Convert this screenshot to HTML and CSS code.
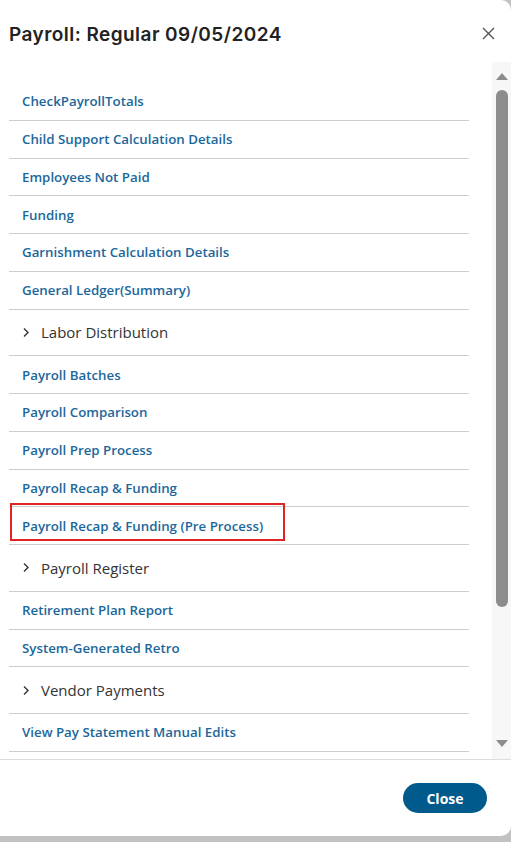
FILE: index.html
```html
<!DOCTYPE html>
<html lang="en">

<head>
    <meta charset="UTF-8">
    <meta name="viewport" content="width=device-width, initial-scale=1.0">
    <title>Payroll Reports</title>
    <link rel="stylesheet" href="styles.css">
</head>

<body>
    <div class="modal">
        <div class="modal-header">
            <h1 class="modal-title">Payroll: Regular 09/05/2024</h1>
            <button class="close-x" aria-label="Close">
                <svg width="13" height="13" viewBox="0 0 13 13">
                    <path d="M1 1 L12 12 M12 1 L1 12" stroke="#555" stroke-width="1.4" fill="none" />
                </svg>
            </button>
        </div>

        <div class="modal-body">
            <div class="report-list">
                <a class="row" href="#">CheckPayrollTotals</a>
                <a class="row" href="#">Child Support Calculation Details</a>
                <a class="row" href="#">Employees Not Paid</a>
                <a class="row" href="#">Funding</a>
                <a class="row" href="#">Garnishment Calculation Details</a>
                <a class="row" href="#">General Ledger(Summary)</a>
                <div class="row group">
                    <svg class="chev" width="8" height="11" viewBox="0 0 8 11">
                        <path d="M2 1.5 L6 5.5 L2 9.5" stroke="#333" stroke-width="1.4" fill="none" />
                    </svg>
                    Labor Distribution
                </div>
                <a class="row" href="#">Payroll Batches</a>
                <a class="row" href="#">Payroll Comparison</a>
                <a class="row" href="#">Payroll Prep Process</a>
                <a class="row" href="#">Payroll Recap &amp; Funding</a>
                <a class="row marked" href="#">Payroll Recap &amp; Funding (Pre Process)<span class="mark"></span></a>
                <div class="row group">
                    <svg class="chev" width="8" height="11" viewBox="0 0 8 11">
                        <path d="M2 1.5 L6 5.5 L2 9.5" stroke="#333" stroke-width="1.4" fill="none" />
                    </svg>
                    Payroll Register
                </div>
                <a class="row" href="#">Retirement Plan Report</a>
                <a class="row" href="#">System-Generated Retro</a>
                <div class="row group">
                    <svg class="chev" width="8" height="11" viewBox="0 0 8 11">
                        <path d="M2 1.5 L6 5.5 L2 9.5" stroke="#333" stroke-width="1.4" fill="none" />
                    </svg>
                    Vendor Payments
                </div>
                <a class="row" href="#">View Pay Statement Manual Edits</a>
            </div>
            <div class="scrollbar">
                <span class="arrow up"></span>
                <span class="thumb"></span>
                <span class="arrow down"></span>
            </div>
        </div>

        <div class="modal-footer">
            <button class="btn-close">Close</button>
        </div>
    </div>
</body>

</html>
```

FILE: styles.css
```css
/* Page */
body {
    margin: 0;
    background-color: #c2c2c2;
    font-family: "Open Sans", "Noto Sans", Arial, sans-serif;
    color: #333;
}

/* Dialog */
.modal {
    width: 511px;
    height: 836px;
    background-color: #fff;
    border-radius: 0 10px 10px 0;
    display: flex;
    flex-direction: column;
    overflow: hidden;
}

.modal-header {
    height: 62px;
    box-sizing: border-box;
    padding: 22px 16px 0 9px;
    display: flex;
    justify-content: space-between;
    align-items: flex-start;
}

.modal-title {
    margin: 0;
    font-family: "Inter", "DejaVu Sans", sans-serif;
    font-size: 19px;
    line-height: 26px;
    font-weight: 600;
    color: #222;
    letter-spacing: 0.45px;
}

.close-x {
    border: none;
    background: none;
    padding: 0;
    margin-top: 5px;
    width: 13px;
    height: 13px;
    cursor: pointer;
}

.close-x svg {
    display: block;
}

/* Scrolling list */
.modal-body {
    height: 697px;
    display: flex;
    border-bottom: 1px solid #ddd;
}

.report-list {
    flex: 1;
    padding: 21px 23px 0 9px;
    overflow: hidden;
}

.row {
    display: flex;
    align-items: center;
    height: 37.75px;
    box-sizing: border-box;
    padding-left: 13px;
    border-bottom: 1px solid #cdcdcd;
    font-size: 13.3px;
    font-weight: 600;
    color: #1b679b;
    text-decoration: none;
    white-space: nowrap;
}

.row.group {
    height: 46.75px;
    padding-left: 13px;
    font-size: 15px;
    font-weight: 400;
    color: #333;
}

.chev {
    margin-right: 11px;
}

.marked {
    position: relative;
}

/* red annotation box */
.mark {
    position: absolute;
    left: 1px;
    top: -4px;
    width: 275px;
    height: 38px;
    box-sizing: border-box;
    border: 2px solid #e02424;
}

.scrollbar {
    width: 19px;
    background-color: #f7f7f7;
    display: flex;
    flex-direction: column;
    align-items: center;
    padding-top: 11px;
    box-sizing: border-box;
}

.arrow {
    width: 0;
    height: 0;
    border-left: 6px solid transparent;
    border-right: 6px solid transparent;
}

.arrow.up {
    border-bottom: 7px solid #8c8c8c;
}

.arrow.down {
    border-top: 7px solid #8c8c8c;
    margin-top: 133px;
}

.thumb {
    width: 12px;
    height: 517px;
    margin-top: 10px;
    border-radius: 6px;
    background-color: #8c8c8c;
}

/* Footer */
.modal-footer {
    flex: 1;
    display: flex;
    justify-content: flex-end;
    align-items: center;
    padding-right: 24px;
}

.btn-close {
    width: 84px;
    height: 30px;
    border: none;
    border-radius: 15px;
    background-color: #005a8c;
    color: #fff;
    font-family: "Open Sans", "Noto Sans", Arial, sans-serif;
    font-size: 14px;
    font-weight: 700;
    cursor: pointer;
}
```
